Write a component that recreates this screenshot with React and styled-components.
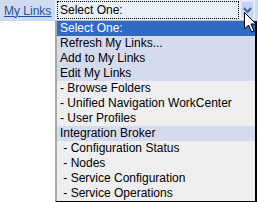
import React from "react";
import styled, { createGlobalStyle } from "styled-components";

const GlobalStyle = createGlobalStyle`
	html, body {
		margin: 0;
		padding: 0;
		background: #ffffff;
		font-family: "Liberation Sans", Arial, sans-serif;
		font-size: 12px;
	}
`;

const options = [
	{ label: "Select One:", kind: "selected" },
	{ label: "Refresh My Links...", kind: "group" },
	{ label: "Add to My Links", kind: "group" },
	{ label: "Edit My Links", kind: "group" },
	{ label: "- Browse Folders", kind: "item" },
	{ label: "- Unified Navigation WorkCenter", kind: "item" },
	{ label: "- User Profiles", kind: "item" },
	{ label: "Integration Broker", kind: "group" },
	{ label: "\u00a0- Configuration Status", kind: "item" },
	{ label: "\u00a0- Nodes", kind: "item" },
	{ label: "\u00a0- Service Configuration", kind: "item" },
	{ label: "\u00a0- Service Operations", kind: "item" },
];

const App = () => {
	return (
		<Page>
			<GlobalStyle />
			<Bar>
				<LinkText>My Links</LinkText>
				<SelectBox>
					<FocusRect>Select One:</FocusRect>
					<ArrowButton>
						<svg width="9" height="7" viewBox="0 0 9 7">
							<path d="M1 1 L4.5 5 L8 1" fill="none" stroke="#4d5f85" strokeWidth="2" />
						</svg>
					</ArrowButton>
				</SelectBox>
			</Bar>
			<ListArea>
				<List>
					{options.map((o) => (
						<Option key={o.label} kind={o.kind}>
							{o.label}
						</Option>
					))}
				</List>
			</ListArea>
			<Cursor width="13" height="22" viewBox="0 0 13 22">
				<path
					d="M0.5 0.5 L0.5 17 L4.5 13 L7.5 20 L10 19 L7 12 L12 12 Z"
					fill="#ffffff"
					stroke="#000000"
					strokeWidth="1"
				/>
			</Cursor>
		</Page>
	);
};

const Page = styled.div`
	position: relative;
	width: 258px;
	height: 202px;
	overflow: hidden;
`;

const Bar = styled.div`
	display: flex;
	align-items: stretch;
	height: 21px;
	background-color: #cddcee;
`;

const LinkText = styled.a`
	display: flex;
	align-items: center;
	padding-left: 4px;
	width: 51px;
	color: #1f4f9e;
	text-decoration: underline;
	font-size: 12px;
	cursor: pointer;
`;

const SelectBox = styled.div`
	display: flex;
	align-items: center;
	width: 198px;
	height: 20px;
	margin-left: 0;
	padding-left: 2px;
	background-color: #eaf0f8;
	border-bottom: 1px solid #b8bcc4;
`;

const FocusRect = styled.div`
	display: flex;
	align-items: center;
	box-sizing: border-box;
	width: 182px;
	height: 18px;
	padding-left: 2px;
	border: 1px dotted #000000;
	color: #000000;
`;

const ArrowButton = styled.div`
	display: flex;
	align-items: center;
	justify-content: center;
	width: 13px;
	height: 18px;
	margin-left: 2px;
	background-color: #c3d4f8;
	border: 1px solid #dbe5fb;
	box-sizing: border-box;
`;

const ListArea = styled.div`
	padding-left: 55px;
`;

const List = styled.div`
	width: 198px;
	border-left: 2px solid #a8a8a8;
	border-right: 2px solid #000000;
	border-bottom: 1px solid #000000;
`;

const rowColors = {
	selected: "#316ac5",
	group: "#d5dbef",
	item: "#eeeeee",
};

const Option = styled.div`
	height: 15px;
	line-height: 15px;
	padding-left: 3px;
	white-space: pre;
	background-color: ${(p) => rowColors[p.kind]};
	color: ${(p) => (p.kind === "selected" ? "#ffffff" : "#000000")};
`;

const Cursor = styled.svg`
	position: absolute;
	left: 244px;
	top: 12px;
`;

export default App;
